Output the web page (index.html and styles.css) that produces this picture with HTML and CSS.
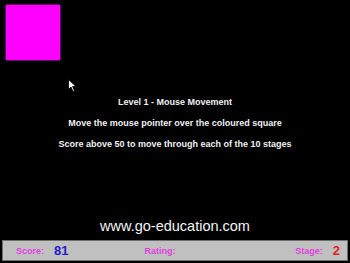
FILE: index.html
```html
<!DOCTYPE html>
<html lang="en">
<head>
    <meta charset="UTF-8">
    <title>Mouse Movement</title>
    <link rel="stylesheet" href="styles.css">
</head>
<body>
    <div class="stage-area">
        <div class="target"></div>
        <svg class="pointer" width="10" height="14" viewBox="0 0 10 14">
            <path d="M0.5 0.5 L0.5 10.5 L3 8 L5 12.5 L6.5 11.8 L4.6 7.5 L8 7.5 Z" fill="#fff" stroke="#000" stroke-width="0.8"/>
        </svg>
        <div class="info">
            <p>Level 1 - Mouse Movement</p>
            <p>Move the mouse pointer over the coloured square</p>
            <p>Score above 50 to move through each of the 10 stages</p>
        </div>
        <div class="site">www.go-education.com</div>
    </div>
    <div class="status-bar">
        <span class="label">Score:</span>
        <span class="value score">81</span>
        <span class="label rating">Rating:</span>
        <span class="label stage-label">Stage:</span>
        <span class="value stage">2</span>
    </div>
</body>
</html>
```

FILE: styles.css
```css
body {
    margin: 0;
    background-color: #000;
    color: #fff;
    font-family: 'Liberation Sans', Arial, sans-serif;
    width: 350px;
    height: 263px;
    overflow: hidden;
}
.stage-area {
    position: relative;
    height: 240px;
}
.target {
    position: absolute;
    left: 6px;
    top: 5px;
    width: 54px;
    height: 55px;
    background-color: #ff00ff;
    box-shadow: 0 0 2px #ff40ff;
}
.pointer {
    position: absolute;
    left: 68px;
    top: 79px;
}
.info {
    padding-top: 96px;
    text-align: center;
    font-size: 9px;
    font-weight: bold;
    color: #f0f0f0;
}
.info p {
    margin: 0 0 9px 0;
    line-height: 12px;
}
.site {
    position: absolute;
    left: 0;
    right: 0;
    top: 218px;
    text-align: center;
    font-size: 14.5px;
    color: #f4f4f4;
}
.status-bar {
    margin: 0 2px;
    height: 19px;
    background-color: #c0c0c0;
    border: 1px solid #707070;
    display: flex;
    align-items: center;
    font-weight: bold;
    padding-left: 13px;
}
.label {
    color: #e040e0;
    font-size: 9px;
}
.value {
    font-size: 13px;
}
.score {
    color: #2020d0;
    margin-left: 10px;
}
.rating {
    margin-left: 76px;
}
.stage-label {
    margin-left: auto;
}
.stage {
    color: #e02020;
    margin-left: 10px;
    margin-right: 7px;
}
```
